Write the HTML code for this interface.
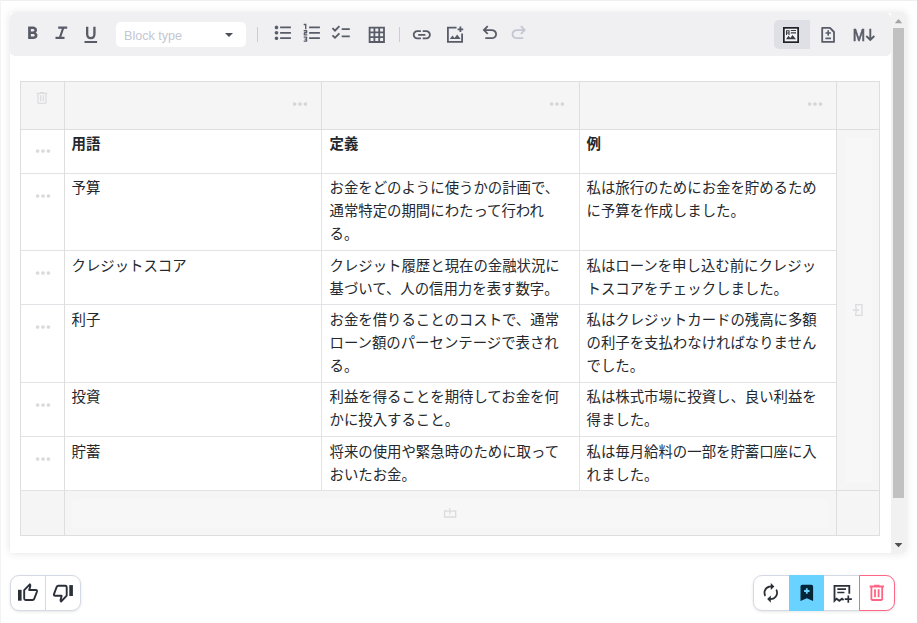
<!DOCTYPE html>
<html lang="ja">
<head>
<meta charset="utf-8">
<title>Editor</title>
<style>
*{box-sizing:border-box;margin:0;padding:0}
html,body{width:917px;height:623px;overflow:hidden;background:#fff}
body{font-family:"Liberation Sans","Noto Sans CJK JP",sans-serif;color:#212529;position:relative}
.abs,.ic,.ln,.bg,.t{position:absolute;display:block}
.edge-t{left:0;top:0;width:917px;height:1px;background:#efefef}
.edge-l{left:0;top:0;width:1px;height:623px;background:#f3f3f3}
.card{left:10px;top:13px;width:896px;height:540px;background:#fff;border-radius:1px;box-shadow:0 0 10px rgba(0,0,0,.11),0 0 2px rgba(0,0,0,.04)}
.toolbar{left:10px;top:13px;width:881px;height:43px;background:#f0f0f3;border-radius:5px}
.select{left:116px;top:22px;width:130px;height:25px;background:#fff;border-radius:5px}
.select span{position:absolute;left:8px;top:5.600px;font-size:12.600px;line-height:17px;color:#c3c7d1;white-space:nowrap}
.caret{left:225.300px;top:33px;width:0;height:0;border-left:4px solid transparent;border-right:4px solid transparent;border-top:4.200px solid #4a4f5a}
.sep{top:27px;width:1px;height:15px;background:#cbccd4}
.active{left:774px;top:20px;width:36px;height:29px;background:#dfe0e6;border-radius:5px 0 0 5px}
.sbt{left:891px;top:13px;width:15px;height:540px;background:#f1f1f1;border-radius:0 3px 3px 0}
.thumb{left:893px;top:28px;width:11px;height:470px;background:#c1c1c1}
.up{left:895px;top:19px;width:0;height:0;border-left:3.500px solid transparent;border-right:3.500px solid transparent;border-bottom:4px solid #a3a3a3}
.dn{left:895px;top:543px;width:0;height:0;border-left:3.500px solid transparent;border-right:3.500px solid transparent;border-top:4px solid #505050}
.ln{background:#dedede}
.bg{background:#f5f5f5}
.t{font-size:14.400px;line-height:23.040px;color:#24282d;white-space:normal;word-break:normal}
.t.b{font-weight:700}
.grp{top:575px;height:36px;border-radius:9px;background:#fff;box-shadow:0 1px 3px rgba(0,0,0,.10)}
</style>
</head>
<body>
<div class="abs edge-t"></div><div class="abs edge-l"></div>
<div class="abs card"></div>
<div class="abs toolbar"></div>
<div class="abs sbt"></div><div class="abs thumb"></div><svg class="ic" style="left:891px;top:13px" width="15" height="540" viewBox="891 13 15 540"><path fill="#a3a3a3" d="M894.800 23.200L898.500 18.900L902.200 23.200Z"/><path fill="#505050" d="M894.600 542.900H902.400L898.500 547.200Z"/></svg>

<svg class="ic" style="left:21.9px;top:21.9px" width="21.6" height="21.6" viewBox="0 -960 960 960"><path fill="#585c68"  d="M272-200v-560h221q65 0 120 40t55 111q0 51-23 78.500T602-491q25 11 55.500 41t30.500 90q0 89-65 124.500T501-200H272Zm121-112h104q48 0 58.500-24.500T566-372q0-11-10.500-35.500T494-432H393v120Zm0-228h93q33 0 48-17t15-38q0-24-17-39t-44-15h-95v109Z"/></svg>
<svg class="ic" style="left:50.9px;top:21.9px" width="21.6" height="21.6" viewBox="0 -960 960 960"><path fill="#585c68"  d="M200-200v-100h160l120-360H320v-100h400v100H580L460-300h140v100H200Z"/></svg>
<svg class="ic" style="left:80px;top:23.9px" width="21.6" height="21.6" viewBox="0 -960 960 960"><path fill="#585c68"  d="M200-120v-80h560v80H200Zm280-160q-101 0-157-63t-56-167v-330h103v336q0 56 28 91t82 35q54 0 82-35t28-91v-336h103v330q0 104-56 167t-157 63Z"/></svg>
<div class="abs select"><span>Block type</span></div><i class="abs caret"></i>
<div class="abs sep" style="left:257px"></div><div class="abs sep" style="left:399px"></div>
<svg class="ic" style="left:272px;top:22.1px" width="21.6" height="21.6" viewBox="0 -960 960 960"><path fill="#585c68"  d="M360-200v-80h480v80H360Zm0-240v-80h480v80H360Zm0-240v-80h480v80H360ZM200-160q-33 0-56.500-23.500T120-240q0-33 23.500-56.500T200-320q33 0 56.500 23.500T280-240q0 33-23.500 56.500T200-160Zm0-240q-33 0-56.500-23.500T120-480q0-33 23.500-56.500T200-560q33 0 56.500 23.500T280-480q0 33-23.500 56.500T200-400Zm0-240q-33 0-56.500-23.500T120-720q0-33 23.500-56.500T200-800q33 0 56.500 23.500T280-720q0 33-23.500 56.500T200-640Z"/></svg>
<svg class="ic" style="left:301px;top:22.1px" width="21.6" height="21.6" viewBox="0 -960 960 960"><path fill="#585c68"  d="M120-80v-60h100v-30h-60v-60h60v-30H120v-60h120q17 0 28.500 11.500T280-280v40q0 17-11.500 28.500T240-200q17 0 28.500 11.500T280-160v40q0 17-11.500 28.500T240-80H120Zm0-280v-110q0-17 11.500-28.500T160-510h60v-30H120v-60h120q17 0 28.500 11.500T280-560v70q0 17-11.500 28.500T240-450h-60v30h100v60H120Zm60-280v-180h-60v-60h120v240h-60Zm180 440v-80h480v80H360Zm0-240v-80h480v80H360Zm0-240v-80h480v80H360Z"/></svg>
<svg class="ic" style="left:330px;top:22.1px" width="21.6" height="21.6" viewBox="0 -960 960 960"><path fill="#585c68"  d="M222-200 80-342l56-56 85 85 170-170 56 57-225 226Zm0-320L80-662l56-56 85 85 170-170 56 57-225 226Zm298 240v-80h360v80H520Zm0-320v-80h360v80H520Z"/></svg>
<svg class="ic" style="left:366.3px;top:24.2px" width="21.6" height="21.6" viewBox="0 -960 960 960"><path fill="#585c68"  d="M120-120v-720h720v720H120Zm80-80h133v-133H200v133Zm213 0h134v-133H413v133Zm214 0h133v-133H627v133ZM200-413h133v-134H200v134Zm213 0h134v-134H413v134Zm214 0h133v-134H627v134ZM200-627h133v-133H200v133Zm213 0h134v-133H413v133Zm214 0h133v-133H627v133Z"/></svg>
<svg class="ic" style="left:411.1px;top:23.9px" width="21.6" height="21.6" viewBox="0 -960 960 960"><path fill="#585c68"  d="M440-280H280q-83 0-141.500-58.500T80-480q0-83 58.500-141.500T280-680h160v80H280q-50 0-85 35t-35 85q0 50 35 85t85 35h160v80ZM320-440v-80h320v80H320Zm200 160v-80h160q50 0 85-35t35-85q0-50-35-85t-85-35H520v-80h160q83 0 141.500 58.500T880-480q0 83-58.500 141.500T680-280H520Z"/></svg>
<svg class="ic" style="left:444px;top:24px" width="22" height="22" viewBox="444 24 22 22"><path fill="none" stroke="#585c68" stroke-width="1.8" d="M456.500 27.700H447.900V41.900H462.100V33.500"/><path fill="#585c68" d="M459.500 26.500h1.800v1.900h1.900v1.800h-1.900v1.900h-1.800v-1.900h-1.900v-1.800h1.900zM449.800 39l2.700-3.600 2 2.700 2.700-3.600 3.400 4.500z"/></svg>
<svg class="ic" style="left:479.3px;top:22.3px" width="21.6" height="21.6" viewBox="0 -960 960 960"><path fill="#585c68"  d="M280-200v-80h284q63 0 109.500-40T720-420q0-60-46.500-100T564-560H312l104 104-56 56-200-200 200-200 56 56-104 104h252q97 0 166.500 63T800-420q0 94-69.500 157T564-200H280Z"/></svg>
<svg class="ic" style="left:508px;top:22.3px" width="21.6" height="21.6" viewBox="0 -960 960 960"><path fill="#c4c7d2"  d="M396-200q-97 0-166.500-63T160-420q0-94 69.500-157T396-640h252L544-744l56-56 200 200-200 200-56-56 104-104H396q-63 0-109.500 40T240-420q0 60 46.500 100T396-280h284v80H396Z"/></svg>
<div class="abs active"></div>
<svg class="ic" style="left:780px;top:24px" width="22" height="22" viewBox="780 24 22 22"><rect x="783.850" y="27.850" width="14.300" height="14.300" fill="#f3f3f6" stroke="#1f2228" stroke-width="1.700"/><path fill="#3a3c42" d="M786 30.300h3.600v4.700h-1.100v-1.600h-1.400v1.600H786zM787.100 31.200v1.300h1.400v-1.300zM790.800 30h5.200v1.100h-5.200zM790.800 32.300h5.200v1.100h-5.200zM786 39.300l2.500-3.500 1.800 2.300 2.200-3 3.500 4.200z"/></svg>
<svg class="ic" style="left:818px;top:24px" width="22" height="22" viewBox="818 24 22 22"><path fill="none" stroke="#585c68" stroke-width="1.800" stroke-linejoin="round" d="M822.200 27.900H830L834 32V41.900H822.200Z"/><path fill="#585c68" d="M827.400 30.300h1.600v1.900h1.900v1.600h-1.900v1.900h-1.600v-1.900h-1.900v-1.600h1.900zM825.400 37.600h5.600v1.600h-5.600z"/></svg>
<svg class="ic" style="left:850px;top:24px;will-change:transform" width="28" height="22" viewBox="850 24 28 22"><text x="852.700" y="40.900" font-family="Liberation Sans, sans-serif" font-weight="400" font-size="17" fill="#585c68" stroke="#585c68" stroke-width="0.700" textLength="12.400" lengthAdjust="spacingAndGlyphs">M</text><path fill="none" stroke="#585c68" stroke-width="1.900" d="M870.300 28.700V40M866.300 36L870.300 40L874.300 36"/></svg>
<div class="bg" style="left:20px;top:81px;width:860px;height:49px"></div>
<div class="bg" style="left:836px;top:129px;width:44px;height:407px"></div>
<div class="bg" style="left:20px;top:490px;width:860px;height:46px"></div>
<div class="bg" style="left:845px;top:137px;width:27px;height:346px;background:#f7f7f7;border-radius:4px"></div>
<div class="bg" style="left:72px;top:498.500px;width:757px;height:29.500px;background:#f7f7f7;border-radius:4px"></div>
<div class="ln" style="left:20px;top:81px;width:860px;height:1px"></div>
<div class="ln" style="left:20px;top:535px;width:860px;height:1px"></div>
<div class="ln" style="left:20px;top:129px;width:860px;height:1px"></div>
<div class="ln" style="left:836px;top:490px;width:44px;height:1px"></div>
<div class="ln" style="left:20px;top:490px;width:816px;height:1px;background:#e2e2e7"></div>
<div class="ln" style="left:20px;top:173px;width:817px;height:1px;background:#e2e2e7"></div>
<div class="ln" style="left:20px;top:250px;width:817px;height:1px;background:#e2e2e7"></div>
<div class="ln" style="left:20px;top:304px;width:817px;height:1px;background:#e2e2e7"></div>
<div class="ln" style="left:20px;top:382px;width:817px;height:1px;background:#e2e2e7"></div>
<div class="ln" style="left:20px;top:436px;width:817px;height:1px;background:#e2e2e7"></div>
<div class="ln" style="left:20px;top:81px;width:1px;height:455px"></div>
<div class="ln" style="left:879px;top:81px;width:1px;height:455px"></div>
<div class="ln" style="left:64px;top:81px;width:1px;height:455px"></div>
<div class="ln" style="left:836px;top:81px;width:1px;height:455px"></div>
<div class="ln" style="left:321px;top:81px;width:1px;height:49px"></div>
<div class="ln" style="left:579px;top:81px;width:1px;height:49px"></div>
<div class="ln" style="left:321px;top:130px;width:1px;height:360px;background:#e2e2e7"></div>
<div class="ln" style="left:579px;top:130px;width:1px;height:360px;background:#e2e2e7"></div>
<svg class="ic" style="left:290.9px;top:101px" width="18" height="6" viewBox="-9 -3 18 6"><circle cx="-5.400" cy="0" r="1.850" fill="#d6d6d6"/><circle cx="0" cy="0" r="1.850" fill="#d6d6d6"/><circle cx="5.400" cy="0" r="1.850" fill="#d6d6d6"/></svg>
<svg class="ic" style="left:547.8px;top:101px" width="18" height="6" viewBox="-9 -3 18 6"><circle cx="-5.400" cy="0" r="1.850" fill="#d6d6d6"/><circle cx="0" cy="0" r="1.850" fill="#d6d6d6"/><circle cx="5.400" cy="0" r="1.850" fill="#d6d6d6"/></svg>
<svg class="ic" style="left:806px;top:101px" width="18" height="6" viewBox="-9 -3 18 6"><circle cx="-5.400" cy="0" r="1.850" fill="#d6d6d6"/><circle cx="0" cy="0" r="1.850" fill="#d6d6d6"/><circle cx="5.400" cy="0" r="1.850" fill="#d6d6d6"/></svg>
<svg class="ic" style="left:33.8px;top:148.3px" width="18" height="6" viewBox="-9 -3 18 6"><circle cx="-5.400" cy="0" r="1.850" fill="#dadada"/><circle cx="0" cy="0" r="1.850" fill="#dadada"/><circle cx="5.400" cy="0" r="1.850" fill="#dadada"/></svg>
<svg class="ic" style="left:33.8px;top:193.3px" width="18" height="6" viewBox="-9 -3 18 6"><circle cx="-5.400" cy="0" r="1.850" fill="#dadada"/><circle cx="0" cy="0" r="1.850" fill="#dadada"/><circle cx="5.400" cy="0" r="1.850" fill="#dadada"/></svg>
<svg class="ic" style="left:33.8px;top:270.3px" width="18" height="6" viewBox="-9 -3 18 6"><circle cx="-5.400" cy="0" r="1.850" fill="#dadada"/><circle cx="0" cy="0" r="1.850" fill="#dadada"/><circle cx="5.400" cy="0" r="1.850" fill="#dadada"/></svg>
<svg class="ic" style="left:33.8px;top:324.3px" width="18" height="6" viewBox="-9 -3 18 6"><circle cx="-5.400" cy="0" r="1.850" fill="#dadada"/><circle cx="0" cy="0" r="1.850" fill="#dadada"/><circle cx="5.400" cy="0" r="1.850" fill="#dadada"/></svg>
<svg class="ic" style="left:33.8px;top:402.3px" width="18" height="6" viewBox="-9 -3 18 6"><circle cx="-5.400" cy="0" r="1.850" fill="#dadada"/><circle cx="0" cy="0" r="1.850" fill="#dadada"/><circle cx="5.400" cy="0" r="1.850" fill="#dadada"/></svg>
<svg class="ic" style="left:33.8px;top:456.3px" width="18" height="6" viewBox="-9 -3 18 6"><circle cx="-5.400" cy="0" r="1.850" fill="#dadada"/><circle cx="0" cy="0" r="1.850" fill="#dadada"/><circle cx="5.400" cy="0" r="1.850" fill="#dadada"/></svg>
<svg class="ic" style="left:34.1px;top:90px" width="16" height="16" viewBox="0 -960 960 960"><path fill="#dddde0"  d="M280-120q-33 0-56.500-23.500T200-200v-520h-40v-80h200v-40h240v40h200v80h-40v520q0 33-23.500 56.500T680-120H280Zm400-600H280v520h400v-520ZM360-280h80v-360h-80v360Zm160 0h80v-360h-80v360ZM280-720v520-520Z"/></svg>
<svg class="ic" style="left:850px;top:301px" width="16" height="18" viewBox="850 301 16 18"><path fill="none" stroke="#dcdcdf" stroke-width="1.300" d="M855.700 307V304.700H862V315.400H855.700V313"/><path fill="none" stroke="#dcdcdf" stroke-width="1.300" d="M853 310H859.200M856.100 307V313"/></svg>
<svg class="ic" style="left:441px;top:506px" width="18" height="14" viewBox="441 506 18 14"><path fill="none" stroke="#dcdcdf" stroke-width="1.300" d="M447 511H444.500V517H455.700V511H453"/><path fill="none" stroke="#dcdcdf" stroke-width="1.300" d="M446.800 511.200H452.800M449.800 508.100V514.300"/></svg>
<div class="t b" style="left:71.5px;top:133px;width:242.0px">用語</div>
<div class="t b" style="left:329.5px;top:133px;width:243.0px">定義</div>
<div class="t b" style="left:586.5px;top:133px;width:242.0px">例</div>
<div class="t" style="left:71.5px;top:177px;width:242.0px">予算</div>
<div class="t" style="left:329.5px;top:177px;width:243.0px">お金をどのように使うかの計画で、通常特定の期間にわたって行われる。</div>
<div class="t" style="left:586.5px;top:177px;width:242.0px">私は旅行のためにお金を貯めるために予算を作成しました。</div>
<div class="t" style="left:71.5px;top:255px;width:242.0px">クレジットスコア</div>
<div class="t" style="left:329.5px;top:255px;width:243.0px">クレジット履歴と現在の金融状況に基づいて、人の信用力を表す数字。</div>
<div class="t" style="left:586.5px;top:255px;width:242.0px">私はローンを申し込む前にクレジットスコアをチェックしました。</div>
<div class="t" style="left:71.5px;top:309px;width:242.0px">利子</div>
<div class="t" style="left:329.5px;top:309px;width:243.0px">お金を借りることのコストで、通常ローン額のパーセンテージで表される。</div>
<div class="t" style="left:586.5px;top:309px;width:242.0px">私はクレジットカードの残高に多額の利子を支払わなければなりませんでした。</div>
<div class="t" style="left:71.5px;top:386px;width:242.0px">投資</div>
<div class="t" style="left:329.5px;top:386px;width:243.0px">利益を得ることを期待してお金を何かに投入すること。</div>
<div class="t" style="left:586.5px;top:386px;width:242.0px">私は株式市場に投資し、良い利益を得ました。</div>
<div class="t" style="left:71.5px;top:441px;width:242.0px">貯蓄</div>
<div class="t" style="left:329.5px;top:441px;width:243.0px">将来の使用や緊急時のために取っておいたお金。</div>
<div class="t" style="left:586.5px;top:441px;width:242.0px">私は毎月給料の一部を貯蓄口座に入れました。</div>
<div class="abs grp" style="left:10px;width:71px;border:1px solid #d5d9e3"></div>
<div class="abs" style="left:45px;top:576px;width:1px;height:34px;background:#d5d9e3"></div>
<svg class="ic" style="left:14px;top:580px" width="28" height="26" viewBox="14 580 28 26"><path fill="#2b2f38" d="M18 589.800h3.600v10.900H18z"/><path fill="none" stroke="#2b2f38" stroke-width="1.900" stroke-linejoin="round" d="M24.200 590.200L29.800 584.300Q30.600 584.900 30.300 586L29.200 590H35.800Q37.200 590 37 591.500L34.300 598.700Q33.800 600 32.500 600H25.700Q24.200 600 24.200 598.500Z"/></svg>
<svg class="ic" style="left:49px;top:580px" width="28" height="26" viewBox="14 580 28 26"><g transform="rotate(180 27.950 592.900)"><path fill="#2b2f38" d="M18 589.800h3.600v10.900H18z"/><path fill="none" stroke="#2b2f38" stroke-width="1.900" stroke-linejoin="round" d="M24.200 590.200L29.800 584.300Q30.600 584.900 30.300 586L29.200 590H35.800Q37.200 590 37 591.500L34.300 598.700Q33.800 600 32.500 600H25.700Q24.200 600 24.200 598.500Z"/></g></svg>
<div class="abs grp" style="left:753px;width:142px;border:1px solid #d5d9e3;overflow:hidden"></div>
<div class="abs" style="left:789px;top:575px;width:35px;height:36px;background:#69d2ff"></div>
<div class="abs" style="left:859px;top:575px;width:36px;height:36px;border:1.200px solid #ff6584;border-radius:0 9px 9px 0;background:#fff"></div>
<svg class="ic" style="left:760px;top:582.200px" width="21.600" height="21.600" viewBox="0 0 24 24"><path fill="#2b2f38" d="M12 6v3l4-4-4-4v3c-4.420 0-8 3.580-8 8 0 1.570.46 3.030 1.240 4.260L6.700 14.800c-.45-.83-.7-1.790-.7-2.800 0-3.310 2.690-6 6-6zm6.760 1.740L17.300 9.200c.44.840.7 1.790.7 2.800 0 3.310-2.690 6-6 6v-3l-4 4 4 4v-3c4.420 0 8-3.580 8-8 0-1.570-.46-3.030-1.240-4.260z"/></svg>
<svg class="ic" style="left:796.2px;top:582.2px" width="21.6" height="21.6" viewBox="0 -960 960 960"><path fill="#03253a"  d="M200-120v-640q0-33 23.500-56.500T280-840h400q33 0 56.500 23.500T760-760v640L480-240 200-120Zm240-320h80v-80h80v-80h-80v-80h-80v80h-80v80h80v80Z"/></svg>
<svg class="ic" style="left:830px;top:581px" width="26" height="26" viewBox="830 581 26 26"><path fill="none" stroke="#2b2f38" stroke-width="1.800" d="M849.300 593.800V585.800H834.500V600.800L836.600 598.700L839.300 600.800L842 598.700L843.600 600"/><path fill="none" stroke="#2b2f38" stroke-width="1.700" d="M837.300 589.200H846M837.300 592.500H844.400M844.700 599.200H851.900M848.300 595.600V602.800"/></svg>
<svg class="ic" style="left:866px;top:582px" width="21.6" height="21.6" viewBox="0 -960 960 960"><path fill="#ff6584"  d="M280-120q-33 0-56.500-23.500T200-200v-520h-40v-80h200v-40h240v40h200v80h-40v520q0 33-23.500 56.500T680-120H280Zm400-600H280v520h400v-520ZM360-280h80v-360h-80v360Zm160 0h80v-360h-80v360ZM280-720v520-520Z"/></svg>
</body>
</html>
